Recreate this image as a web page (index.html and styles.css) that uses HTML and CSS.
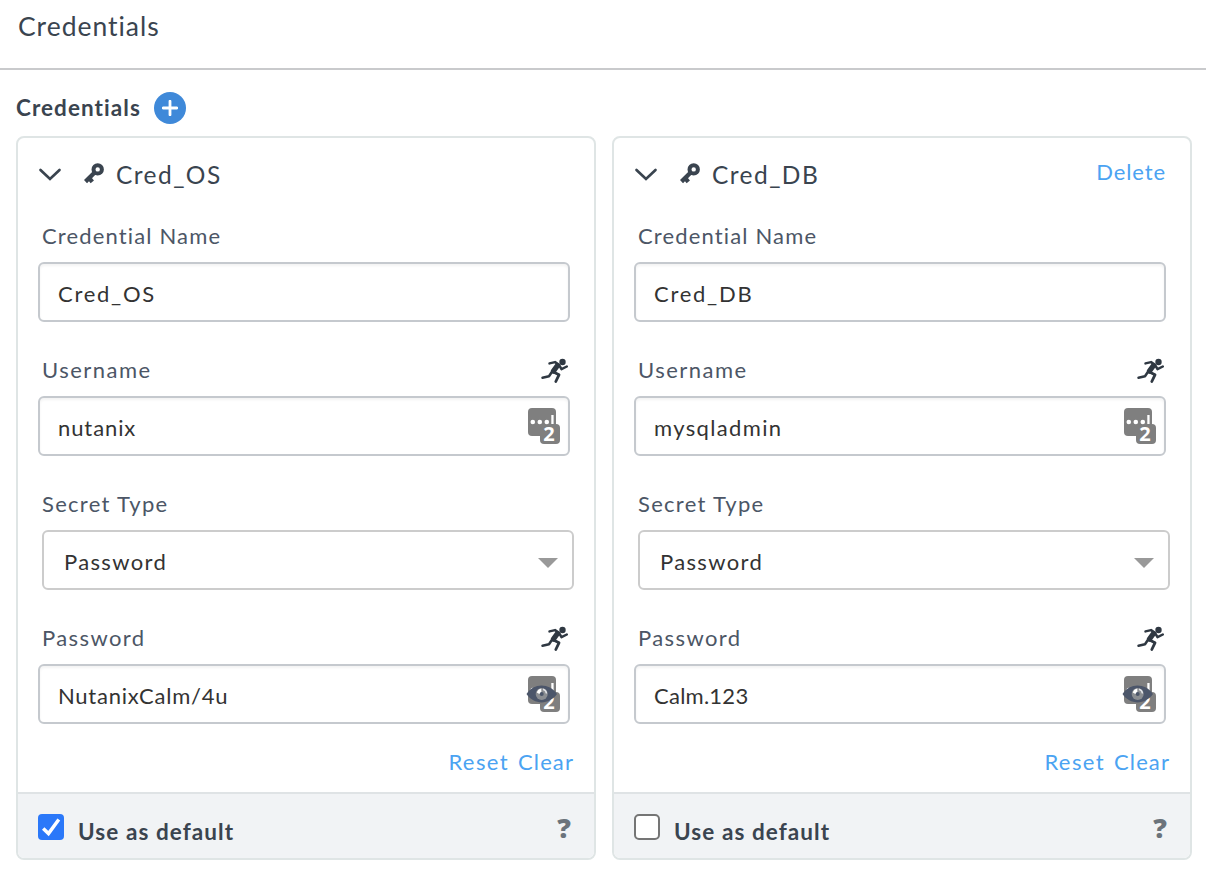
FILE: index.html
```html
<!DOCTYPE html>
<html lang="en">
<head>
<meta charset="utf-8">
<title>Credentials</title>
<link rel="stylesheet" href="styles.css">
</head>
<body>
<svg class="sprite" aria-hidden="true">
  <symbol id="chevron" viewBox="0 0 24 16"><path d="M2.500 3 12 12 21.500 3" fill="none" stroke="currentColor" stroke-width="2.700" stroke-linecap="round"/></symbol>
  <symbol id="key" viewBox="0 0 20 21"><circle cx="13.700" cy="6.400" r="4.200" fill="none" stroke="currentColor" stroke-width="4"/><path d="M10.900 9.300 1.500 18.600M4.800 14.700l3.500 4.200" fill="none" stroke="currentColor" stroke-width="4.300"/></symbol>
  <symbol id="runner" viewBox="0 0 28 26"><circle cx="21.500" cy="4" r="3.200" fill="currentColor"/><g fill="none" stroke="currentColor" stroke-linecap="round" stroke-linejoin="round"><path d="M8.500 5.400 14 4.100 18 6.800 20.500 11.200 25.800 8.500" stroke-width="2.500"/><path d="M16.300 7.800 12.500 13" stroke-width="5.300"/><path d="M10.500 14.500 8 18.200 1.500 19.700" stroke-width="2.500"/><path d="M12.500 14 18 16.800 14.800 23.500" stroke-width="2.800"/></g></symbol>
  <symbol id="manager" viewBox="0 0 32 36"><rect width="28" height="28" rx="4" fill="#7f7f7f"/><rect x="12" y="16" width="20" height="20" rx="4" fill="#7f7f7f"/><g fill="#fff"><circle cx="4.800" cy="14" r="2.300"/><circle cx="11.800" cy="14" r="2.300"/><circle cx="18.800" cy="14" r="2.300"/><rect x="23.300" y="7" width="2.300" height="9"/></g></symbol>
  <symbol id="eye" viewBox="0 0 32 20"><path d="M.5 10C8-1.200 23-1.200 31 10 23 21.200 8 21.200.5 10Z" fill="#4c566a"/><circle cx="15.700" cy="10" r="6" fill="#8b8e92"/><path d="M10.800 8.500a5.500 5.500 0 0 1 4.500-4v4l-2 1.500Z" fill="#fff"/><path d="M17 5.200a5 5 0 0 1 3.500 4.300" fill="none" stroke="#e2e4e7" stroke-width="1.500"/><circle cx="15.700" cy="10" r="2" fill="#4c566a"/></symbol>
</svg>

<header class="page-header"><h1 class="page-title">Credentials</h1></header>

<main class="content">
  <div class="section-head">
    <h2 class="section-title">Credentials</h2>
    <button class="add" aria-label="Add credential"><svg width="16" height="16" viewBox="0 0 16 16"><path d="M8 1.200v13.600M1.200 8h13.600" stroke="#fff" stroke-width="2.800" stroke-linecap="round"/></svg></button>
  </div>

  <div class="cards">
    <section class="card">
      <div class="card-head">
        <svg class="chevron"><use href="#chevron"/></svg>
        <svg class="key"><use href="#key"/></svg>
        <h3 class="card-title">Cred_OS</h3>
      </div>
      <div class="field">
        <div class="label-row"><span class="label l-name">Credential Name</span></div>
        <div class="input"><span class="v-cred">Cred_OS</span></div>
      </div>
      <div class="field">
        <div class="label-row"><span class="label l-user">Username</span><svg class="runner"><use href="#runner"/></svg></div>
        <div class="input"><span class="v-nutanix">nutanix</span><span class="manager"><svg width="32" height="36"><use href="#manager"/></svg><b class="manager-count">2</b></span></div>
      </div>
      <div class="field">
        <div class="label-row"><span class="label">Secret Type</span></div>
        <div class="input select"><span class="v-pass">Password</span><span class="caret"></span></div>
      </div>
      <div class="field">
        <div class="label-row"><span class="label l-pass">Password</span><svg class="runner"><use href="#runner"/></svg></div>
        <div class="input"><span class="v-secret">NutanixCalm/4u</span><span class="manager"><svg width="32" height="36"><use href="#manager"/></svg><b class="manager-count">2</b></span><svg class="eye"><use href="#eye"/></svg></div>
      </div>
      <div class="actions"><a class="link reset">Reset</a><a class="link clear">Clear</a></div>
      <div class="card-foot">
        <span class="check checked"><svg width="26" height="26" viewBox="0 0 26 26"><path d="M5.200 14.500 10.500 19.500 20.800 5.500" fill="none" stroke="#fff" stroke-width="3.500"/></svg></span>
        <span class="default">Use as default</span><span class="help">?</span>
      </div>
    </section>

    <section class="card">
      <div class="card-head">
        <svg class="chevron"><use href="#chevron"/></svg>
        <svg class="key"><use href="#key"/></svg>
        <h3 class="card-title">Cred_DB</h3>
        <a class="link delete">Delete</a>
      </div>
      <div class="field">
        <div class="label-row"><span class="label l-name">Credential Name</span></div>
        <div class="input"><span class="v-cred">Cred_DB</span></div>
      </div>
      <div class="field">
        <div class="label-row"><span class="label l-user">Username</span><svg class="runner"><use href="#runner"/></svg></div>
        <div class="input"><span class="v-mysql">mysqladmin</span><span class="manager"><svg width="32" height="36"><use href="#manager"/></svg><b class="manager-count">2</b></span></div>
      </div>
      <div class="field">
        <div class="label-row"><span class="label">Secret Type</span></div>
        <div class="input select"><span class="v-pass">Password</span><span class="caret"></span></div>
      </div>
      <div class="field">
        <div class="label-row"><span class="label l-pass">Password</span><svg class="runner"><use href="#runner"/></svg></div>
        <div class="input"><span class="v-calm">Calm.123</span><span class="manager"><svg width="32" height="36"><use href="#manager"/></svg><b class="manager-count">2</b></span><svg class="eye"><use href="#eye"/></svg></div>
      </div>
      <div class="actions"><a class="link reset">Reset</a><a class="link clear">Clear</a></div>
      <div class="card-foot">
        <span class="check"></span>
        <span class="default">Use as default</span><span class="help">?</span>
      </div>
    </section>
  </div>
</main>
</body>
</html>
```
FILE: styles.css
```css
* { box-sizing: border-box; }
body { margin: 0; background: #fff; color: #3a444f; font: 22px/28px Lato, "Open Sans", sans-serif; overflow: hidden; }
h1, h2, h3 { margin: 0; }
.sprite { position: absolute; width: 0; height: 0; }

.page-header { height: 70px; padding: 10px 18px; border-bottom: 2px solid #c9cacc; }
.page-title { font-size: 26.5px; line-height: 32px; font-weight: 400; letter-spacing: .98px; }
.content { padding: 22px 14px 0 16px; }
.section-head { display: flex; align-items: center; gap: 14px; height: 32px; }
.section-title { width: 124px; font-size: 22.5px; line-height: 28px; font-weight: 700; letter-spacing: 1.06px; white-space: nowrap; }
.add { display: grid; place-items: center; width: 32px; height: 32px; padding: 0; border: 0; border-radius: 50%; background: #3f89d9; }

.cards { display: grid; grid-template-columns: 580px 580px; gap: 16px; margin-top: 12px; }
.card { height: 724px; border: 2px solid #dfe5e5; border-radius: 8px; overflow: hidden; }
.card-head { display: flex; align-items: flex-start; height: 84px; padding: 20px 24px 0 20px; }
.chevron { width: 24px; height: 16px; margin-top: 9px; }
.key { width: 20px; height: 21px; margin: 5px 0 0 22px; }
.card-title { margin: 3px 0 0 12px; font-size: 24.5px; line-height: 28px; font-weight: 400; letter-spacing: 1.45px; }
.delete { margin-left: auto; letter-spacing: .95px; }

.field { height: 134px; padding: 0 24px 0 20px; }
.label-row { display: flex; justify-content: space-between; height: 40px; padding: 0 1px 0 4px; }
.label { color: #4c5666; letter-spacing: 1.28px; }
.l-name { letter-spacing: 1.15px; }
.l-user { letter-spacing: 1.5px; }
.l-pass { letter-spacing: 1.4px; }
.runner { width: 28px; height: 26px; margin-top: 2px; color: #2f3842; }
.input { position: relative; height: 60px; padding: 16px 18px; border: 2px solid #c5c9ce; border-radius: 6px; color: #333; letter-spacing: .9px; box-shadow: inset 0 2px 3px rgba(0, 0, 0, .05); }
.v-cred { letter-spacing: 1.75px; }
.v-mysql, .v-pass { letter-spacing: 1.35px; }
.v-secret { letter-spacing: .75px; }
.v-calm { letter-spacing: .25px; }
.select { display: flex; justify-content: space-between; margin: 0 -4px 0 4px; padding: 16px 14px 0 20px; border-color: #ccc; box-shadow: none; }
.caret { width: 20px; height: 10px; margin-top: 10px; background: #999; clip-path: polygon(0 0, 100% 0, 50% 100%); }
.manager { position: absolute; top: 10px; right: 8px; width: 32px; height: 36px; }
.manager svg { display: block; }
.manager-count { position: absolute; right: 0; bottom: 0; width: 22px; color: #fff; font: bold 20px/20px "Open Sans", sans-serif; letter-spacing: 0; text-align: center; }
.eye { position: absolute; top: 17.500px; right: 10px; width: 32px; height: 20px; }

.actions { display: flex; justify-content: flex-end; gap: 9px; height: 34px; padding-right: 20px; }
.actions .link { margin-top: -10px; }
.link { color: #4ba3f2; letter-spacing: .9px; }
.actions .reset { letter-spacing: 1.4px; }
.actions .clear { letter-spacing: 1.1px; }
.card-foot { display: flex; align-items: flex-start; height: 66px; padding: 20px 23px 0 20px; border-top: 2px solid #dfe3e5; background: #f1f3f5; }
.check { width: 26px; height: 26px; border: 2px solid #757575; border-radius: 5px; background: #fff; }
.check.checked { border: 0; background: #2b78f9; border-radius: 4px; }
.check svg { display: block; }
.default { margin: 4px 0 0 14px; font-size: 22.5px; font-weight: 700; letter-spacing: 1.08px; }
.help { margin: 0 0 0 auto; color: #6b737b; font: 800 27px/28px "Open Sans", sans-serif; }
```
